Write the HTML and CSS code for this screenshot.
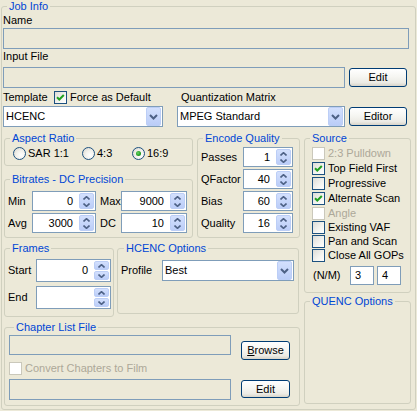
FILE: index.html
```html
<!DOCTYPE html>
<html>
<head>
<meta charset="utf-8">
<title>Job Info</title>
<link rel="stylesheet" href="styles.css">
</head>
<body>
<div class="group job">
  <div class="title">Job Info</div>
  <div class="job-body">
    <div class="lbl">Name</div>
    <div class="tb tb-ro name-box"></div>
    <div class="lbl">Input File</div>
    <div class="row input-row">
      <div class="tb tb-ro input-box"></div>
      <button class="btn edit-btn">Edit</button>
    </div>
    <div class="row template-row">
      <div class="template-left">
        <span class="template-lbl">Template</span>
        <span class="cb"><svg viewBox="0 0 11 11" width="11" height="11"><path d="M2 5.2L4.3 7.5L8.8 3" fill="none" stroke="#21A121" stroke-width="2"/></svg></span>
        <span class="cb-lbl">Force as Default</span>
      </div>
      <span class="quant-lbl">Quantization Matrix</span>
    </div>
    <div class="row combo-row">
      <div class="combo combo-template">
        <span class="combo-val">HCENC</span>
        <span class="drop"><svg width="9" height="6" viewBox="0 0 9 6"><path d="M1 1L4.5 4.5L8 1" fill="none" stroke="#4D6185" stroke-width="2"/></svg></span>
      </div>
      <div class="combo combo-quant">
        <span class="combo-val">MPEG Standard</span>
        <span class="drop"><svg width="9" height="6" viewBox="0 0 9 6"><path d="M1 1L4.5 4.5L8 1" fill="none" stroke="#4D6185" stroke-width="2"/></svg></span>
      </div>
      <button class="btn editor-btn">Editor</button>
    </div>

    <div class="lower">
      <div class="main-col">
        <div class="top-area">
          <div class="left-col">
            <div class="group aspect">
              <div class="title">Aspect Ratio</div>
              <div class="radios">
                <div class="ritem"><span class="radio"></span><span>SAR 1:1</span></div>
                <div class="ritem"><span class="radio"></span><span>4:3</span></div>
                <div class="ritem"><span class="radio on"></span><span>16:9</span></div>
              </div>
            </div>
            <div class="group bitrates">
              <div class="title">Bitrates - DC Precision</div>
              <div class="bgrid">
                <span class="slbl">Min</span>
                <div class="spin"><span class="val">0</span><span class="spinbtn"><span class="sb"><svg width="7" height="4" viewBox="0 0 7 4"><path d="M0.5 3.5L3.5 0.7L6.5 3.5" fill="none" stroke="#4D6185" stroke-width="1.6"/></svg></span><span class="sb"><svg width="7" height="4" viewBox="0 0 7 4"><path d="M0.5 0.5L3.5 3.3L6.5 0.5" fill="none" stroke="#4D6185" stroke-width="1.6"/></svg></span></span></div>
                <span class="slbl max-lbl">Max</span>
                <div class="spin"><span class="val">9000</span><span class="spinbtn"><span class="sb"><svg width="7" height="4" viewBox="0 0 7 4"><path d="M0.5 3.5L3.5 0.7L6.5 3.5" fill="none" stroke="#4D6185" stroke-width="1.6"/></svg></span><span class="sb"><svg width="7" height="4" viewBox="0 0 7 4"><path d="M0.5 0.5L3.5 3.3L6.5 0.5" fill="none" stroke="#4D6185" stroke-width="1.6"/></svg></span></span></div>
                <span class="slbl">Avg</span>
                <div class="spin"><span class="val">3000</span><span class="spinbtn"><span class="sb"><svg width="7" height="4" viewBox="0 0 7 4"><path d="M0.5 3.5L3.5 0.7L6.5 3.5" fill="none" stroke="#4D6185" stroke-width="1.6"/></svg></span><span class="sb"><svg width="7" height="4" viewBox="0 0 7 4"><path d="M0.5 0.5L3.5 3.3L6.5 0.5" fill="none" stroke="#4D6185" stroke-width="1.6"/></svg></span></span></div>
                <span class="slbl max-lbl">DC</span>
                <div class="spin"><span class="val">10</span><span class="spinbtn"><span class="sb"><svg width="7" height="4" viewBox="0 0 7 4"><path d="M0.5 3.5L3.5 0.7L6.5 3.5" fill="none" stroke="#4D6185" stroke-width="1.6"/></svg></span><span class="sb"><svg width="7" height="4" viewBox="0 0 7 4"><path d="M0.5 0.5L3.5 3.3L6.5 0.5" fill="none" stroke="#4D6185" stroke-width="1.6"/></svg></span></span></div>
              </div>
            </div>
          </div>
          <div class="group encode">
            <div class="title">Encode Quality</div>
            <div class="egrid">
              <span class="slbl">Passes</span>
              <div class="spin"><span class="val">1</span><span class="spinbtn"><span class="sb"><svg width="7" height="4" viewBox="0 0 7 4"><path d="M0.5 3.5L3.5 0.7L6.5 3.5" fill="none" stroke="#4D6185" stroke-width="1.6"/></svg></span><span class="sb"><svg width="7" height="4" viewBox="0 0 7 4"><path d="M0.5 0.5L3.5 3.3L6.5 0.5" fill="none" stroke="#4D6185" stroke-width="1.6"/></svg></span></span></div>
              <span class="slbl">QFactor</span>
              <div class="spin"><span class="val">40</span><span class="spinbtn"><span class="sb"><svg width="7" height="4" viewBox="0 0 7 4"><path d="M0.5 3.5L3.5 0.7L6.5 3.5" fill="none" stroke="#4D6185" stroke-width="1.6"/></svg></span><span class="sb"><svg width="7" height="4" viewBox="0 0 7 4"><path d="M0.5 0.5L3.5 3.3L6.5 0.5" fill="none" stroke="#4D6185" stroke-width="1.6"/></svg></span></span></div>
              <span class="slbl">Bias</span>
              <div class="spin"><span class="val">60</span><span class="spinbtn"><span class="sb"><svg width="7" height="4" viewBox="0 0 7 4"><path d="M0.5 3.5L3.5 0.7L6.5 3.5" fill="none" stroke="#4D6185" stroke-width="1.6"/></svg></span><span class="sb"><svg width="7" height="4" viewBox="0 0 7 4"><path d="M0.5 0.5L3.5 3.3L6.5 0.5" fill="none" stroke="#4D6185" stroke-width="1.6"/></svg></span></span></div>
              <span class="slbl">Quality</span>
              <div class="spin"><span class="val">16</span><span class="spinbtn"><span class="sb"><svg width="7" height="4" viewBox="0 0 7 4"><path d="M0.5 3.5L3.5 0.7L6.5 3.5" fill="none" stroke="#4D6185" stroke-width="1.6"/></svg></span><span class="sb"><svg width="7" height="4" viewBox="0 0 7 4"><path d="M0.5 0.5L3.5 3.3L6.5 0.5" fill="none" stroke="#4D6185" stroke-width="1.6"/></svg></span></span></div>
            </div>
          </div>
        </div>

        <div class="mid-area">
          <div class="group frames">
            <div class="title">Frames</div>
            <div class="fgrid">
              <span class="slbl">Start</span>
              <div class="spin spin-tall"><span class="val">0</span><span class="spinbtn split"><span class="sb"><svg width="7" height="4" viewBox="0 0 7 4"><path d="M0.5 3.5L3.5 0.7L6.5 3.5" fill="none" stroke="#4D6185" stroke-width="1.6"/></svg></span><span class="sb"><svg width="7" height="4" viewBox="0 0 7 4"><path d="M0.5 0.5L3.5 3.3L6.5 0.5" fill="none" stroke="#4D6185" stroke-width="1.6"/></svg></span></span></div>
              <span class="slbl">End</span>
              <div class="spin spin-tall"><span class="val"></span><span class="spinbtn split"><span class="sb"><svg width="7" height="4" viewBox="0 0 7 4"><path d="M0.5 3.5L3.5 0.7L6.5 3.5" fill="none" stroke="#4D6185" stroke-width="1.6"/></svg></span><span class="sb"><svg width="7" height="4" viewBox="0 0 7 4"><path d="M0.5 0.5L3.5 3.3L6.5 0.5" fill="none" stroke="#4D6185" stroke-width="1.6"/></svg></span></span></div>
            </div>
          </div>
          <div class="group hcenc">
            <div class="title">HCENC Options</div>
            <div class="row profile-row">
              <span class="profile-lbl">Profile</span>
              <div class="combo combo-profile">
                <span class="combo-val">Best</span>
                <span class="drop"><svg width="9" height="6" viewBox="0 0 9 6"><path d="M1 1L4.5 4.5L8 1" fill="none" stroke="#4D6185" stroke-width="2"/></svg></span>
              </div>
            </div>
          </div>
        </div>

        <div class="group chapter">
          <div class="title">Chapter List File</div>
          <div class="row ch-row1">
            <div class="tb tb-ro ch-box"></div>
            <button class="btn browse-btn"><u>B</u>rowse</button>
          </div>
          <div class="row ch-row2">
            <span class="cb dis"></span>
            <span class="cb-lbl dis-text">Convert Chapters to Film</span>
          </div>
          <div class="row ch-row3">
            <div class="tb tb-ro ch-box2"></div>
            <button class="btn ch-edit-btn">Edit</button>
          </div>
        </div>
      </div>

      <div class="side-col">
        <div class="group source">
          <div class="title">Source</div>
          <div class="clist">
            <div class="citem h15"><span class="cb dis"></span><span class="cb-lbl dis-text">2:3 Pulldown</span></div>
            <div class="citem h15"><span class="cb"><svg viewBox="0 0 11 11" width="11" height="11"><path d="M2 5.2L4.3 7.5L8.8 3" fill="none" stroke="#21A121" stroke-width="2"/></svg></span><span class="cb-lbl">Top Field First</span></div>
            <div class="citem h15"><span class="cb"></span><span class="cb-lbl">Progressive</span></div>
            <div class="citem h15"><span class="cb"><svg viewBox="0 0 11 11" width="11" height="11"><path d="M2 5.2L4.3 7.5L8.8 3" fill="none" stroke="#21A121" stroke-width="2"/></svg></span><span class="cb-lbl">Alternate Scan</span></div>
            <div class="citem h14"><span class="cb dis"></span><span class="cb-lbl dis-text">Angle</span></div>
            <div class="citem h14"><span class="cb"></span><span class="cb-lbl">Existing VAF</span></div>
            <div class="citem h14"><span class="cb"></span><span class="cb-lbl">Pan and Scan</span></div>
            <div class="citem h13"><span class="cb"></span><span class="cb-lbl">Close All GOPs</span></div>
          </div>
          <div class="row nm-row">
            <span class="nm-lbl">(N/M)</span>
            <div class="tb nm-box">3</div>
            <div class="tb nm-box nm-box2">4</div>
          </div>
        </div>
        <div class="group quenc">
          <div class="title">QUENC Options</div>
        </div>
      </div>
    </div>
  </div>
</div>
</body>
</html>
```

FILE: styles.css
```css
* { box-sizing: border-box; }

html, body { margin: 0; padding: 0; }

body {
  background: #ECE9D8;
  font-family: "Liberation Sans", Arial, sans-serif;
  font-size: 11px;
  line-height: 13px;
  color: #000;
  width: 417px;
  height: 411px;
  overflow: hidden;
}

/* group boxes */
.group {
  border: 1px solid #D0D0BF;
  border-radius: 3px;
  margin-top: 6px;
}
.title {
  display: block;
  width: max-content;
  height: 13px;
  margin: -7px 0 0 5px;
  padding: 0 2px;
  background: #ECE9D8;
  color: #0046D5;
  white-space: nowrap;
}

.job {
  width: 415px;
  height: 404px;
  margin: 6px 0 0 1px;
}
.job-body { padding-left: 1px; }

.lbl { height: 13px; margin-top: 1px; white-space: nowrap; }

.row { display: flex; align-items: flex-start; }

/* text boxes */
.tb {
  border: 1px solid #7F9DB9;
  background: #FFFFFF;
}
.tb-ro { background: #ECE9D8; }

.name-box { width: 406px; height: 21px; margin-top: 1px; }
.input-row { margin-top: 4px; }
.input-box { width: 342px; height: 21px; }

/* buttons */
.btn {
  display: block;
  flex: none;
  font: inherit;
  line-height: 15px;
  color: #000;
  padding: 0;
  border: 1px solid #003C74;
  border-radius: 3px;
  background: linear-gradient(#FFFFFF 0%, #F6F6F2 45%, #ECEBE5 80%, #D8D4C9 100%);
  text-align: center;
}
.btn u { text-decoration: underline; }
.edit-btn { width: 58px; height: 19px; margin: 1px 0 0 4px; }
.editor-btn { width: 58px; height: 19px; margin: 1px 0 0 4px; }

/* template row */
.template-row { margin-top: 3px; height: 13px; align-items: center; }
.template-left { width: 174px; display: flex; align-items: center; }
.template-lbl { width: 51px; white-space: nowrap; }
.cb-lbl { margin-left: 3px; white-space: nowrap; }
.quant-lbl { margin-left: 4px; white-space: nowrap; }

/* checkboxes */
.cb {
  width: 13px;
  height: 13px;
  flex: none;
  display: flex;
  align-items: center;
  justify-content: center;
  border: 1px solid #1C5180;
  background: linear-gradient(135deg, #DCDCD7 0%, #F4F4F1 60%, #FFFFFF 100%);
}
.cb.dis { border-color: #CAC8BB; background: #FFFFFF; }
.dis-text { color: #ACA899; }

/* combos */
.combo-row { margin-top: 2px; }
.combo {
  display: flex;
  align-items: center;
  height: 21px;
  flex: none;
  border: 1px solid #7F9DB9;
  background: #FFFFFF;
}
.combo-val { flex: 1; padding-left: 2px; white-space: nowrap; overflow: hidden; }
.drop {
  width: 15px;
  height: 19px;
  margin-right: 1px;
  flex: none;
  display: flex;
  align-items: center;
  justify-content: center;
  border: 1px solid #BCCEF6;
  border-radius: 2px;
  background: linear-gradient(#D3E0FD, #BBCDF8);
}
.combo-template { width: 160px; }
.combo-quant { width: 168px; margin-left: 14px; }

/* lower section */
.lower { display: flex; align-items: flex-start; margin: 5px 0 0 1px; }
.main-col { width: 296px; flex: none; }
.side-col { width: 107px; flex: none; margin-left: 4px; }
.top-area { display: flex; align-items: flex-start; }
.left-col { width: 189px; flex: none; }

.aspect { height: 28px; }
.radios {
  display: grid;
  grid-template-columns: 69px 50px auto;
  margin: 2px 0 0 8px;
}
.ritem { display: flex; align-items: center; height: 13px; gap: 2px; white-space: nowrap; }
.radio {
  width: 13px;
  height: 13px;
  flex: none;
  border-radius: 50%;
  border: 1px solid #1C5180;
  background: radial-gradient(circle at 65% 65%, #FFFFFF 0%, #F2F1EC 45%, #D6D3C8 100%);
  display: flex;
  align-items: center;
  justify-content: center;
}
.radio.on::after {
  content: "";
  width: 5px;
  height: 5px;
  border-radius: 50%;
  background: radial-gradient(circle at 40% 40%, #6CD36C 0%, #23A023 55%, #187418 100%);
}

.bitrates { height: 59px; margin-top: 13px; }
.bgrid {
  display: grid;
  grid-template-columns: 24px 64px 25px 66px;
  grid-auto-rows: 20px;
  row-gap: 2px;
  margin: 5px 0 0 3px;
}
.slbl { align-self: center; white-space: nowrap; }
.max-lbl { padding-left: 4px; }

/* spinners */
.spin {
  display: flex;
  height: 20px;
  border: 1px solid #7F9DB9;
  background: #FFFFFF;
}
.spin-tall { height: 23px; }
.val { flex: 1; align-self: center; text-align: right; padding-right: 6px; white-space: nowrap; }
.spinbtn {
  width: 15px;
  flex: none;
  margin: 1px 1px 1px 0;
  display: flex;
  flex-direction: column;
  border: 1px solid #BCCEF6;
  border-radius: 2px;
  background: linear-gradient(#D3E0FD, #BBCDF8);
}
.sb { flex: 1; display: flex; align-items: center; justify-content: center; }
.spinbtn.split { border: none; background: none; gap: 1px; }
.spinbtn.split .sb {
  border: 1px solid #BCCEF6;
  border-radius: 2px;
  background: linear-gradient(#D3E0FD, #BBCDF8);
}

.encode { width: 103px; height: 100px; margin-left: 4px; flex: none; }
.egrid {
  display: grid;
  grid-template-columns: 42px 50px;
  grid-auto-rows: 20px;
  row-gap: 2px;
  margin: 2px 0 0 3px;
}

.mid-area { display: flex; align-items: flex-start; margin-top: 4px; }
.frames { width: 110px; height: 69px; flex: none; }
.fgrid {
  display: grid;
  grid-template-columns: 28px 75px;
  grid-auto-rows: 23px;
  row-gap: 4px;
  margin: 4px 0 0 3px;
}
.hcenc { width: 182px; height: 66px; margin-left: 3px; flex: none; }
.hcenc .title { margin-left: 6px; }
.profile-row { margin: 5px 0 0 3px; align-items: center; }
.profile-lbl { width: 41px; white-space: nowrap; }
.combo-profile { width: 132px; }

.chapter { height: 79px; margin-top: 10px; padding-left: 4px; }
.ch-row1 { margin-top: 1px; }
.ch-box { width: 222px; height: 20px; }
.browse-btn { width: 49px; height: 19px; margin: 6px 0 0 10px; }
.ch-row2 { margin-top: 2px; height: 13px; align-items: center; }
.ch-row3 { margin-top: 4px; }
.ch-box2 { width: 222px; height: 21px; }
.ch-edit-btn { width: 49px; height: 18px; margin: 1px 0 0 10px; }

/* source */
.source { height: 155px; }
.clist { margin: 2px 0 0 7px; display: flex; flex-direction: column; }
.citem { display: flex; align-items: flex-start; }
.citem .cb-lbl { line-height: 13px; }
.h15 { height: 15px; }
.h14 { height: 14px; }
.h13 { height: 13px; }
.nm-row { margin: 4px 0 0 8px; align-items: center; }
.nm-lbl { width: 37px; white-space: nowrap; }
.nm-box { width: 24px; height: 19px; padding-left: 4px; line-height: 17px; }
.nm-box2 { margin-left: 3px; }

.quenc { height: 103px; margin-top: 8px; }
```
